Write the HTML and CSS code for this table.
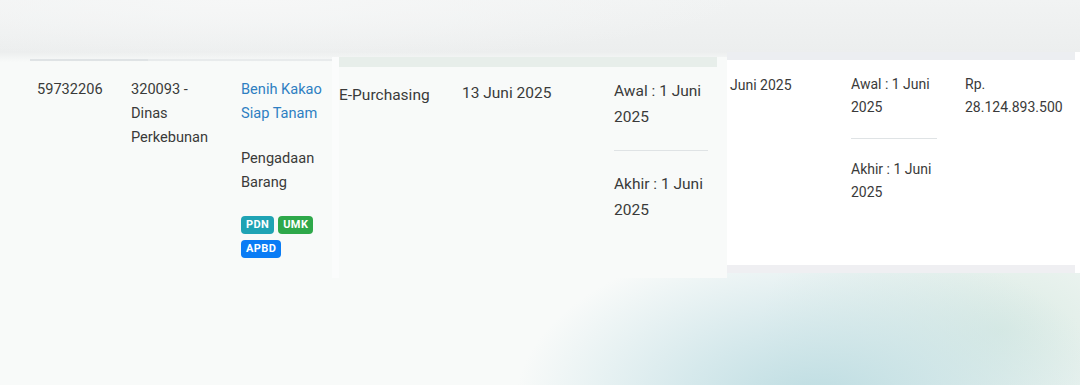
FILE: index.html
```html
<!DOCTYPE html>
<html lang="id">
<head>
<meta charset="utf-8">
<title>Paket</title>
<link rel="stylesheet" href="styles.css">
</head>
<body>
<div class="stage">
  <div class="frag frag-a">
    <div class="row">
      <div class="cell a1">59732206</div>
      <div class="cell a2">320093 -<br>Dinas<br>Perkebunan</div>
      <div class="cell a3">
        <a class="link" href="#">Benih Kakao<br>Siap Tanam</a>
        <p class="jenis">Pengadaan<br>Barang</p>
        <div class="badges">
          <span class="badge pdn">PDN</span>
          <span class="badge umk">UMK</span>
          <span class="badge apbd">APBD</span>
        </div>
      </div>
    </div>
  </div>

  <div class="frag frag-b">
    <div class="band band-b"></div>
    <div class="row">
      <div class="cell b1">E-Purchasing</div>
      <div class="cell b2">13 Juni 2025</div>
      <div class="cell b3">
        <div>Awal : 1 Juni<br>2025</div>
        <hr class="sep sep-b">
        <div>Akhir : 1 Juni<br>2025</div>
      </div>
    </div>
  </div>

  <div class="frag frag-c">
    <div class="band band-c"></div>
    <div class="body-c">
      <div class="row">
        <div class="cell c1">Juni 2025</div>
        <div class="cell c2">
          <div>Awal : 1 Juni<br>2025</div>
          <hr class="sep sep-c">
          <div>Akhir : 1 Juni<br>2025</div>
        </div>
        <div class="cell c3">Rp.<br>28.124.893.500</div>
      </div>
    </div>
    <div class="band band-c-bottom"></div>
  </div>
</div>
</body>
</html>
```

FILE: styles.css
```css
* { box-sizing: border-box; }

html, body {
  margin: 0;
  padding: 0;
  width: 1080px;
  height: 385px;
  overflow: hidden;
}

body {
  font-family: Roboto, "Noto Sans", sans-serif;
  color: #3a3a3a;
  background:
    radial-gradient(ellipse 300px 170px at 815px 405px, #bcdce1 0%, rgba(196,224,229,0.65) 45%, rgba(248,250,249,0) 100%),
    radial-gradient(ellipse 240px 150px at 1000px 330px, #dbebe4 0%, rgba(248,250,249,0) 100%),
    radial-gradient(ellipse 500px 60px at 250px 0px, #f6f7f7 0%, rgba(240,242,242,0) 100%),
    linear-gradient(180deg, #f1f3f3 0px, #eceeee 52px, #f8faf9 62px, #f8faf9 100%);
}

.stage {
  display: flex;
  align-items: flex-start;
  padding-left: 30px;
}

.frag { flex: none; }

.row {
  display: flex;
  align-items: flex-start;
}

.cell { flex: none; }

/* ---- fragment A ---- */
.frag-a {
  width: 302px;
  margin-top: 59px;
  border-top: 2px solid #e8ebec;
  font-size: 14.6px;
  line-height: 24px;
  position: relative;
}
.frag-a::before {
  content: "";
  position: absolute;
  left: 0;
  top: -2px;
  width: 118px;
  height: 2px;
  background: #dfe3e5;
}
.a1 { width: 101px; padding: 16px 0 0 7px; }
.a2 { width: 110px; padding-top: 16px; }
.a3 { width: 91px; padding-top: 16px; }

.link {
  color: #2e7fc2;
  text-decoration: none;
}
.jenis {
  margin: 21px 0 0;
}
.badges {
  display: flex;
  flex-wrap: wrap;
  gap: 6px 4px;
  margin-top: 22px;
}
.badge {
  display: inline-block;
  height: 18px;
  line-height: 18px;
  padding: 0 5px;
  border-radius: 4px;
  color: #fff;
  font-size: 11px;
  font-weight: 700;
  letter-spacing: 0.4px;
}
.pdn { background: #1fa3b4; }
.umk { background: #2ea84a; }
.apbd { background: #0a7cf5; }

/* ---- fragment B ---- */
.frag-b {
  width: 395px;
  height: 221px;
  margin-top: 57px;
  background: #f8faf9;
  border-left: 7px solid #fbfcfc;
  font-size: 15.5px;
  line-height: 26px;
}
.band-b {
  height: 10px;
  margin-right: 10px;
  background: #e7eeea;
}
.b1 { width: 123px; padding-top: 15px; }
.b2 { width: 152px; padding-top: 13px; }
.b3 { width: 96px; padding-top: 11px; }

.sep {
  border: 0;
  border-top: 1px solid #dfe3e5;
  margin: 20px 0;
}
.sep-b { width: 94px; }

/* ---- fragment C ---- */
.frag-c {
  width: 353px;
  margin-top: 52px;
  background: #ffffff;
  font-size: 14px;
  line-height: 23px;
}
.band-c {
  height: 8px;
  margin-right: 5px;
  background: #eceef1;
}
.body-c {
  height: 205px;
}
.c1 { width: 124px; padding: 14px 0 0 3px; }
.c2 { width: 114px; padding-top: 13px; }
.c3 { padding-top: 13px; }
.sep-c { width: 86px; margin: 19px 0; }

.band-c-bottom {
  height: 8px;
  margin-right: 5px;
  background: #efeff2;
}
```
